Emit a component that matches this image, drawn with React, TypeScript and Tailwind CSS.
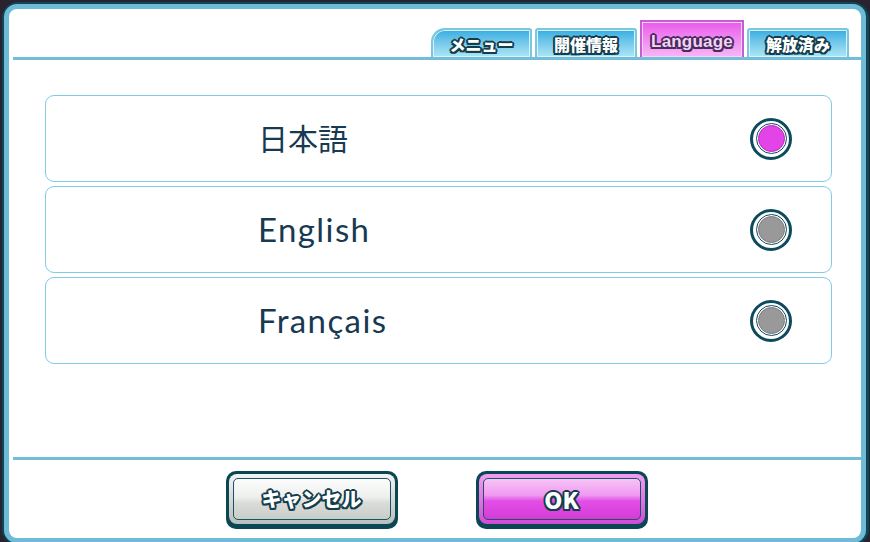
const outlineDark =
  "[text-shadow:-1.5px_-1.5px_0_#143d4c,1.5px_-1.5px_0_#143d4c,-1.5px_1.5px_0_#143d4c,1.5px_1.5px_0_#143d4c,0_-2px_0_#143d4c,0_2px_0_#143d4c,-2px_0_0_#143d4c,2px_0_0_#143d4c]";
const outlinePurple =
  "[text-shadow:-1.5px_-1.5px_0_#4b2a5c,1.5px_-1.5px_0_#4b2a5c,-1.5px_1.5px_0_#4b2a5c,1.5px_1.5px_0_#4b2a5c,0_-2px_0_#4b2a5c,0_2px_0_#4b2a5c,-2px_0_0_#4b2a5c,2px_0_0_#4b2a5c]";

type Lang = { id: string; label: string; latin: boolean };

const languages: Lang[] = [
  { id: "ja", label: "日本語", latin: false },
  { id: "en", label: "English", latin: true },
  { id: "fr", label: "Français", latin: true },
];

function Tab({
  label,
  active,
  first,
  width,
}: {
  label: string;
  active?: boolean;
  first?: boolean;
  width: string;
}) {
  if (active) {
    return (
      <div
        className={[
          "flex h-[37px] items-center justify-center border-2 border-b-0 border-[#c85ad2] bg-gradient-to-b from-[#ea58ec] to-[#f6b6f6] pt-[5px] shadow-[inset_0_0_0_1px_#f8d4f8] font-['Liberation_Sans',sans-serif] text-[17px] font-bold tracking-[0.2px] text-[#f2d4f6]",
          width,
          outlinePurple,
        ].join(" ")}
      >
        {label}
      </div>
    );
  }
  return (
    <div
      className={[
        "flex h-[29px] items-center justify-center border-2 border-b-0 border-[#7cc6e0] bg-gradient-to-b from-[#32aee0] to-[#aee6f6] pt-[1px] shadow-[inset_0_0_0_1px_#d6f2fb] font-['Noto_Sans_CJK_JP',sans-serif] text-[16px] font-black text-white",
        first ? "rounded-tl-[14px] rounded-tr-[3px]" : "rounded-t-[3px]",
        width,
        outlineDark,
      ].join(" ")}
    >
      {label}
    </div>
  );
}

function Radio({ checked }: { checked: boolean }) {
  return (
    <div className="flex h-[42px] w-[42px] items-center justify-center rounded-full border-[3.5px] border-[#0d4a5c] bg-white">
      <div className="flex h-[31px] w-[31px] items-center justify-center rounded-full border border-[#0d4a5c] bg-white">
        <div
          className={
            checked
              ? "h-[27px] w-[27px] rounded-full border border-[#b428c0] bg-[#e344e8]"
              : "h-[27px] w-[27px] rounded-full border border-[#7a7a7a] bg-[#999999]"
          }
        />
      </div>
    </div>
  );
}

function GameButton({ label, primary }: { label: string; primary?: boolean }) {
  return (
    <div className="h-[58px] w-[172px] rounded-[10px] bg-[#0b4654] px-[3px] pb-[5px] pt-[3px]">
      <div
        className={[
          "h-full rounded-[8px] p-[4px]",
          primary
            ? "bg-gradient-to-b from-[#f29cf2] to-[#d04ad6]"
            : "bg-gradient-to-b from-[#f2f4f2] to-[#b9bfbc]",
        ].join(" ")}
      >
        <div
          className={[
            "flex h-full items-center justify-center rounded-[5px] border-[1.5px] border-[#1c5262] font-['Noto_Sans_CJK_JP',sans-serif] font-black text-white",
            primary
              ? "text-[23px] bg-[linear-gradient(to_bottom,#f6c4f6_0%,#f09af0_40%,#e34fe6_55%,#d43cd8_100%)]"
              : "text-[20px] bg-[linear-gradient(to_bottom,#fbfcfb_0%,#eef0ee_45%,#d9dcd9_60%,#c9cdca_100%)]",
            outlineDark,
          ].join(" ")}
        >
          {label}
        </div>
      </div>
    </div>
  );
}

export default function App() {
  const selected = "ja";

  return (
    <div className="h-[542px] w-[870px] overflow-hidden bg-[#2a2230] pl-[2px] pr-[1px] pt-[2px]">
      <div className="h-[543px] rounded-[16px] border-2 border-r-[3.5px] border-[#0d4654] bg-[#0d4654]">
        <div className="flex h-full flex-col rounded-[13px] border-[5px] border-[#6fbad7] bg-white">
          {/* header tabs */}
          <div className="flex h-[48px] items-end justify-end gap-[3px] pr-[12px]">
            <Tab label="メニュー" first width="w-[101px]" />
            <Tab label="開催情報" width="w-[102px]" />
            <Tab label="Language" active width="w-[104px]" />
            <Tab label="解放済み" width="w-[102px]" />
          </div>
          <div className="ml-[4px] h-[3px] bg-[#73bdd9]" />

          {/* language list */}
          <div className="flex flex-1 flex-col gap-[4px] pl-[36px] pr-[29px] pt-[35px]">
            {languages.map((l) => (
              <div
                key={l.id}
                className="flex h-[87px] items-center rounded-[9px] border-[1.5px] border-[#80cce8] pl-[212px] pr-[39px]"
              >
                <div
                  className={[
                    "flex-1 font-['Lato','Noto_Sans_CJK_JP',sans-serif] text-[#173a52]",
                    l.latin ? "text-[33px] tracking-[1.4px]" : "text-[30px]",
                  ].join(" ")}
                >
                  {l.label}
                </div>
                <Radio checked={l.id === selected} />
              </div>
            ))}
          </div>

          {/* footer */}
          <div className="ml-[4px] h-[3px] bg-[#73bdd9]" />
          <div className="flex h-[78px] justify-center gap-[78px] pl-[3px] pt-[11px]">
            <GameButton label="キャンセル" />
            <GameButton label="OK" primary />
          </div>
        </div>
      </div>
    </div>
  );
}
